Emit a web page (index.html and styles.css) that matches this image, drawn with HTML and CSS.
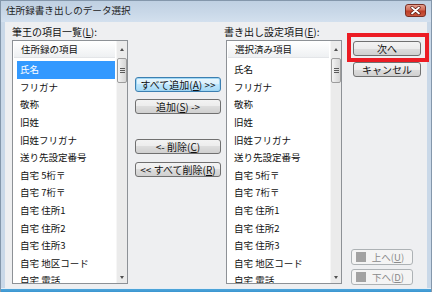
FILE: index.html
```html
<!DOCTYPE html>
<html lang="ja">
<head>
<meta charset="utf-8">
<title>住所録書き出しのデータ選択</title>
<link rel="stylesheet" href="styles.css">
</head>
<body>
<div class="window">
  <div class="titlebar">
    <span class="title">住所録書き出しのデータ選択</span>
    <span class="close"><svg width="11" height="9" viewBox="0 0 11 9"><path d="M2 1.5 L9 7.5 M9 1.5 L2 7.5" stroke="#5a1a10" stroke-width="3.2" stroke-linecap="round"/><path d="M2 1.5 L9 7.5 M9 1.5 L2 7.5" stroke="#ffffff" stroke-width="1.8" stroke-linecap="round"/></svg></span>
  </div>
  <div class="client">
    <div class="list-col">
      <div class="label">筆王の項目一覧(<u>L</u>):</div>
      <div class="listbox">
        <div class="list-main">
          <div class="list-header">住所録の項目</div>
          <div class="rows">
            <div class="row selected">氏名</div>
            <div class="row">フリガナ</div>
            <div class="row">敬称</div>
            <div class="row">旧姓</div>
            <div class="row">旧姓フリガナ</div>
            <div class="row">送り先設定番号</div>
            <div class="row">自宅 5桁〒</div>
            <div class="row">自宅 7桁〒</div>
            <div class="row">自宅 住所1</div>
            <div class="row">自宅 住所2</div>
            <div class="row">自宅 住所3</div>
            <div class="row">自宅 地区コード</div>
            <div class="row">自宅 電話</div>
          </div>
        </div>
        <div class="vscroll">
          <span class="arrow-box"><span class="arrow up"></span></span>
          <span class="thumb"><i></i><i></i><i></i></span>
          <span class="track"></span>
          <span class="arrow-box"><span class="arrow down"></span></span>
        </div>
      </div>
    </div>
    <div class="mid-col">
      <div class="btn default">すべて追加(<u>A</u>) &gt;&gt;</div>
      <div class="btn b-add">追加(<u>S</u>) -&gt;</div>
      <div class="btn b-del">&lt;- 削除(<u>C</u>)</div>
      <div class="btn b-delall">&lt;&lt; すべて削除(<u>R</u>)</div>
    </div>
    <div class="list-col right-list">
      <div class="label">書き出し設定項目(<u>E</u>):</div>
      <div class="listbox">
        <div class="list-main">
          <div class="list-header">選択済み項目</div>
          <div class="rows">
            <div class="row">氏名</div>
            <div class="row">フリガナ</div>
            <div class="row">敬称</div>
            <div class="row">旧姓</div>
            <div class="row">旧姓フリガナ</div>
            <div class="row">送り先設定番号</div>
            <div class="row">自宅 5桁〒</div>
            <div class="row">自宅 7桁〒</div>
            <div class="row">自宅 住所1</div>
            <div class="row">自宅 住所2</div>
            <div class="row">自宅 住所3</div>
            <div class="row">自宅 地区コード</div>
            <div class="row">自宅 電話</div>
          </div>
        </div>
        <div class="vscroll">
          <span class="arrow-box"><span class="arrow up"></span></span>
          <span class="thumb"><i></i><i></i><i></i></span>
          <span class="track"></span>
          <span class="arrow-box"><span class="arrow down"></span></span>
        </div>
      </div>
    </div>
    <div class="side-col">
      <div class="btn b-next">次へ</div>
      <div class="btn b-cancel">キャンセル</div>
      <div class="btn disabled b-up"><span class="dis-icon"></span><span class="dis-text">上へ(<u>U</u>)</span></div>
      <div class="btn disabled b-down"><span class="dis-icon"></span><span class="dis-text">下へ(<u>D</u>)</span></div>
    </div>
  </div>
  <div class="bottom-edge"></div>
  <div class="annotation"></div>
</div>
</body>
</html>
```
FILE: styles.css
```css
html, body {
  margin: 0;
  padding: 0;
  background: #c9d8e8;
}
body {
  font-family: "Noto Sans CJK JP", "Noto Sans", sans-serif;
  font-size: 9.5px;
  color: #111;
}
u {
  text-decoration: underline;
  text-underline-offset: 1px;
}
.window {
  position: relative;
  width: 432px;
  height: 292px;
  box-sizing: border-box;
  border: 1px solid #8497ab;
  border-bottom: none;
  padding: 0 4px;
  background: #c9d8e8;
  display: flex;
  flex-direction: column;
  overflow: hidden;
}
.titlebar {
  margin: 0 -4px;
  height: 21px;
  flex: none;
  display: flex;
  align-items: flex-start;
  justify-content: space-between;
  padding: 0 5px 0 5px;
  background: linear-gradient(#bfd0e2, #c9d8e8 55%, #d3e0ee);
}
.title {
  font-size: 9.6px;
  line-height: 12px;
  margin-top: 3px;
  color: #1c1c1c;
}
.close {
  margin-top: 3px;
  width: 21px;
  height: 13px;
  box-sizing: border-box;
  border: 1px solid #7a2f24;
  border-radius: 3px;
  background: linear-gradient(#e4a08f, #d06a55 45%, #bd3d27 55%, #c9583f);
  display: flex;
  align-items: center;
  justify-content: center;
}
.client {
  flex: 1;
  display: flex;
  padding: 0 0 0 7px;
  background: #eeeff1;
  min-height: 0;
}
.list-col {
  width: 116px;
  flex: none;
  display: flex;
  flex-direction: column;
}
.label {
  margin-top: 2px;
  height: 16px;
  line-height: 16px;
  font-size: 10px;
  white-space: nowrap;
}
.right-list {
  margin-left: 5px;
}
.right-list .label {
  margin-left: -2px;
}
.listbox {
  height: 244px;
  box-sizing: border-box;
  border: 1px solid #8d9196;
  background: #fff;
  display: flex;
  overflow: hidden;
}
.list-main {
  flex: 1;
  min-width: 0;
  overflow: hidden;
}
.list-header {
  margin: 0 1px;
  height: 17px;
  line-height: 17px;
  padding-left: 7px;
  background: linear-gradient(#ffffff, #f7f8f9 50%, #eef0f2);
  border-bottom: 1px solid #e3e5e8;
  box-sizing: border-box;
  white-space: nowrap;
}
.rows {
  padding-top: 3.2px;
}
.row {
  height: 17.6px;
  line-height: 17.6px;
  margin: 0 1px 0 4px;
  padding-left: 3px;
  white-space: nowrap;
}
.row.selected {
  background: #3399ff;
  color: #fff;
}
.vscroll {
  width: 11px;
  flex: none;
  display: flex;
  flex-direction: column;
  background: #ebebeb;
  border-left: 1px solid #f6f6f6;
  box-sizing: border-box;
}
.arrow-box {
  height: 17px;
  flex: none;
  display: flex;
  align-items: center;
  justify-content: center;
}
.arrow {
  width: 0;
  height: 0;
  border-left: 2.5px solid transparent;
  border-right: 2.5px solid transparent;
}
.arrow.up {
  border-bottom: 3px solid #505050;
  margin-top: -1px;
}
.arrow.down {
  border-top: 3px solid #505050;
  margin-top: 6px;
}
.thumb {
  height: 25px;
  flex: none;
  box-sizing: border-box;
  border: 1px solid #9c9c9c;
  border-radius: 2px;
  background: linear-gradient(90deg, #f4f4f4, #e3e3e3 50%, #d6d6d6);
  display: flex;
  flex-direction: column;
  align-items: center;
  justify-content: center;
  gap: 1px;
}
.thumb i {
  display: block;
  width: 5px;
  height: 1px;
  background: #5a5a5a;
}
.track {
  flex: 1;
}
.mid-col {
  width: 86px;
  margin-left: 7px;
  flex: none;
  display: flex;
  flex-direction: column;
  padding-top: 55px;
}
.btn {
  height: 15px;
  box-sizing: border-box;
  border: 1px solid #707070;
  border-radius: 3px;
  background: linear-gradient(#f3f3f3, #ececec 50%, #dddddd 50%, #d0d0d0);
  display: flex;
  align-items: center;
  justify-content: center;
  line-height: 13px;
  font-size: 10px;
  white-space: nowrap;
  flex: none;
}
.btn.default {
  border-color: #3c7fb1;
  background: linear-gradient(#eaf6fd, #d9f0fc 50%, #bee6fd 50%, #a7d9f5);
  box-shadow: inset 0 0 0 1px #9fd6f3;
}
.b-add { margin-top: 7px; }
.b-del { margin-top: 25px; }
.b-delall { margin-top: 8px; }
.side-col {
  width: 68px;
  margin-left: 11px;
  flex: none;
  display: flex;
  flex-direction: column;
  padding: 19px 0 3px;
  box-sizing: border-box;
}
.b-cancel { margin-top: 6px; }
.btn.disabled {
  height: 16px;
  width: 62px;
  margin-left: -2px;
  border-color: #adb2b5;
  background: #f4f4f4;
  color: #8a8a8a;
  justify-content: flex-start;
  padding-left: 4px;
  font-size: 9.5px;
}
.b-up { margin-top: auto; }
.b-down { margin-top: 4px; }
.dis-icon {
  width: 10px;
  height: 10px;
  background: #a2a2a2;
  flex: none;
}
.dis-text {
  flex: 1;
  text-align: center;
  padding-right: 2px;
}
.bottom-edge {
  margin: 0 -5px;
  height: 4px;
  flex: none;
  background: linear-gradient(#e6eef6, #e6eef6 1px, #4fa6da 1px, #3a95d0);
}
.annotation {
  position: absolute;
  left: 346px;
  top: 32px;
  width: 82px;
  height: 29px;
  box-sizing: border-box;
  border: 4px solid #ec1c24;
}
```
